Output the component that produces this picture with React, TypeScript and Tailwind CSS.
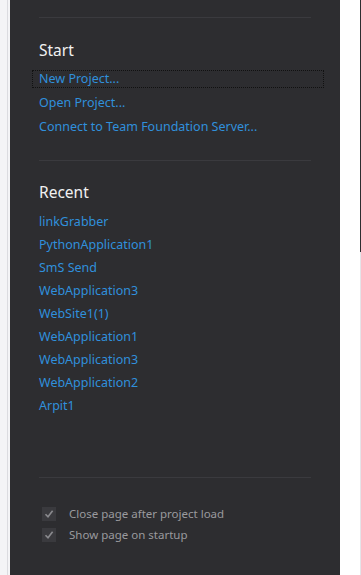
import React from 'react';

const startLinks = ['New Project...', 'Open Project...', 'Connect to Team Foundation Server...'];

const recent = [
    'linkGrabber',
    'PythonApplication1',
    'SmS Send',
    'WebApplication3',
    'WebSite1(1)',
    'WebApplication1',
    'WebApplication3',
    'WebApplication2',
    'Arpit1',
];

const options = ['Close page after project load', 'Show page on startup'];

const Check: React.FC = () => (
    <span className="flex h-[14px] w-[14px] items-center justify-center bg-[#3a3a3e]">
        <svg width="10" height="10" viewBox="0 0 10 10">
            <path d="M1.5 5.2 L4 7.8 L8.6 1.8" fill="none" stroke="#8a8a8e" strokeWidth="1.6" />
        </svg>
    </span>
);

const App: React.FC = () => {
    return (
        <div className="flex h-[575px] w-[361px] overflow-hidden font-['Noto_Sans',sans-serif]">
            {/* left window edge */}
            <div className="flex h-full w-[10px] bg-[#f4f4f6]">
                <div className="w-[7px]" />
                <div className="w-[1px] bg-[#dcdce0]" />
            </div>

            {/* start page */}
            <div className="flex h-full w-[330px] flex-col bg-[#2d2d30] pl-[29px] pr-[29px]">
                <div className="mt-[17px] h-px bg-[#3a3a3e]" />

                <h2 className="mt-[22px] h-[20px] text-[15.5px] leading-[20px] text-[#f1f1f1]">Start</h2>
                <div className="mt-[10px] flex flex-col">
                    {startLinks.map((label, i) => (
                        <a
                            key={label}
                            className={
                                i === 0
                                    ? '-ml-[7px] mr-[-13px] flex h-[18px] items-center border border-dotted border-[#111] pl-[6px] text-[12.5px] text-[#3090dc]'
                                    : 'mt-[6px] flex h-[18px] items-center text-[12.5px] text-[#3090dc]'
                            }
                        >
                            {label}
                        </a>
                    ))}
                </div>

                <div className="mt-[24px] h-px bg-[#3a3a3e]" />

                <h2 className="mt-[21px] h-[20px] text-[15.5px] leading-[20px] text-[#f1f1f1]">Recent</h2>
                <div className="mt-[9px] flex flex-col">
                    {recent.map((name, i) => (
                        <a key={`${name}-${i}`} className="flex h-[23px] items-center text-[12.5px] text-[#3090dc]">
                            {name}
                        </a>
                    ))}
                </div>

                <div className="mt-[59px] h-px bg-[#3a3a3e]" />

                <div className="mt-[29px] flex flex-col gap-[7px] pl-[3px]">
                    {options.map((opt) => (
                        <label key={opt} className="flex h-[14px] items-center gap-[13px] text-[11.5px] text-[#9a9a9e]">
                            <Check />
                            {opt}
                        </label>
                    ))}
                </div>
            </div>

            {/* right side of window */}
            <div className="flex h-full w-[21px] bg-white">
                <div className="flex-1" />
                <div className="flex w-[1px] flex-col">
                    <div className="h-[252px] bg-[#2d2d30]" />
                    <div className="flex-1 bg-[#e4e4e8]" />
                </div>
            </div>
        </div>
    );
};

export default App;
